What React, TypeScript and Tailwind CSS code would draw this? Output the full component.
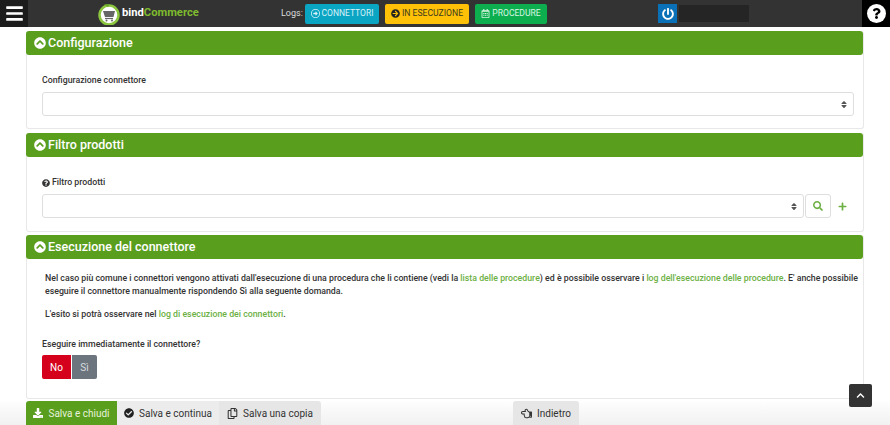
import React from "react";
import { FaChevronCircleUp, FaCheckCircle, FaQuestionCircle, FaRegCalendarAlt, FaArrowCircleRight, FaSearch, FaPlus, FaDownload, FaRegCopy, FaRegHandPointLeft, FaChevronUp, FaBars, FaPowerOff, FaQuestion, FaSort } from "react-icons/fa";
import { FaRegCircleRight } from "react-icons/fa6";

const Logo = () => (
  <svg width="22" height="22" viewBox="0 0 22 22">
    <circle cx="11" cy="12" r="9.5" fill="#fff" stroke="#8cc63f" strokeWidth="2.5" />
    <path d="M6 1.5 L12 1 L10 4 Z" fill="#6aa82c" />
    <path d="M5 8 H17 L15.5 14 H7 Z" fill="#666" />
    <path d="M7 15.5 H15" stroke="#666" strokeWidth="1.2" />
    <circle cx="8.5" cy="17.5" r="1" fill="#666" />
    <circle cx="14" cy="17.5" r="1" fill="#666" />
  </svg>
);

const PanelHead = ({ title }: { title: string }) => (
  <div className="h-6 bg-[#5a9e1e] rounded-[3px] flex items-center pl-2 text-white text-[12.5px] font-medium gap-[2px]">
    <FaChevronCircleUp className="w-[12px] h-[12px]" />
    <span>{title}</span>
  </div>
);

const SelectBox = ({ className }: { className: string }) => (
  <div className={"h-6 border border-[#dedede] rounded-[3px] bg-white flex items-center justify-end pr-[6px] " + className}>
    <FaSort className="w-[6px] h-[9px] text-[#555]" />
  </div>
);

const A = ({ children }: { children: React.ReactNode }) => (
  <a className="text-[#6cb044]">{children}</a>
);

export default function App() {
  return (
    <div className="relative h-[425px] w-[890px] overflow-hidden bg-white flex flex-col font-['Roboto',sans-serif] text-[#333]">
      <header className="h-[27px] shrink-0 bg-[#333333] flex items-center text-white">
        <div className="w-[28px] h-full bg-[#1c1c1c] flex items-center justify-center">
          <FaBars className="w-[19px] h-[19px]" />
        </div>
        <div className="ml-[70px] flex items-center w-[183px]">
          <Logo />
          <span className="ml-[2px] text-[11.2px] font-bold">
            bind<span className="text-[#7fbb2e]">Commerce</span>
          </span>
        </div>
        <span className="w-[24px] text-[9px] text-[#ddd]">Logs:</span>
        <div className="flex items-center gap-[6px]">
          <div className="h-[20px] w-[74px] rounded-[2px] bg-[#0ba5c4] flex items-center justify-center gap-[2px] text-[8.5px] text-[#d8f2f7]">
            <FaRegCircleRight className="w-[9px] h-[9px]" />CONNETTORI
          </div>
          <div className="h-[20px] w-[84px] rounded-[2px] bg-[#ffc107] flex items-center justify-center gap-[2px] text-[8.6px] text-[#3a3a20]">
            <FaArrowCircleRight className="w-[9px] h-[9px] text-[#222]" />IN ESECUZIONE
          </div>
          <div className="h-[20px] w-[72px] rounded-[2px] bg-[#0cae4e] flex items-center justify-center gap-[2px] text-[8.6px] text-[#d8f5e2]">
            <FaRegCalendarAlt className="w-[9px] h-[9px]" />PROCEDURE
          </div>
        </div>
        <div className="ml-[111px] w-[19px] h-[19px] bg-[#0a70b8] flex items-center justify-center">
          <FaPowerOff className="w-[12px] h-[12px]" />
        </div>
        <div className="ml-[2px] w-[70px] h-[17px] bg-[#252525] rounded-[1px]" />
        <div className="ml-auto w-[28px] h-full bg-black flex items-center justify-center">
          <div className="w-[19px] h-[19px] rounded-full bg-white flex items-center justify-center">
            <FaQuestion className="w-[11px] h-[11px] text-black" />
          </div>
        </div>
      </header>

      <main className="flex-1 pl-[26px] pr-[26px] pt-[4px] text-[8.78px]">
        <section className="border-r border-l border-b border-[#e8e8e8] rounded-[3px] h-[98px]">
          <div className="ml-[-1px]"><PanelHead title="Configurazione" /></div>
          <div className="pl-[15px] pr-[9px] pt-[19px]">
            <label className="block font-medium text-[#333] h-[18px]">Configurazione connettore</label>
            <SelectBox className="w-full" />
          </div>
        </section>

        <section className="mt-[4px] border-r border-l border-b border-[#e8e8e8] rounded-[3px] h-[99px]">
          <div className="ml-[-1px]"><PanelHead title="Filtro prodotti" /></div>
          <div className="pl-[15px] pr-[9px] pt-[17px]">
            <label className="flex items-center gap-[2px] font-medium h-[17px] mb-[3px]">
              <FaQuestionCircle className="w-[8px] h-[8px]" />Filtro prodotti
            </label>
            <div className="flex items-center">
              <SelectBox className="w-[762px]" />
              <div className="ml-[1px] w-[26px] h-6 border border-[#dedede] rounded-[3px] flex items-center justify-center">
                <FaSearch className="w-[10px] h-[10px] text-[#6cb044]" />
              </div>
              <FaPlus className="ml-[7px] w-[9px] h-[9px] text-[#6cb044]" />
            </div>
          </div>
        </section>

        <section className="mt-[3px] border-r border-l border-b border-[#e8e8e8] rounded-[3px] h-[164px]">
          <div className="ml-[-1px]"><PanelHead title="Esecuzione del connettore" /></div>
          <div className="pl-[18px] pr-[2px] pt-[13px] leading-[13px] font-medium">
            <p className="whitespace-nowrap">
              Nel caso più comune i connettori vengono attivati dall'esecuzione di una procedura che li contiene (vedi la <A>lista delle procedure</A>) ed è possibile osservare i <A>log dell'esecuzione delle procedure</A>. E' anche possibile
            </p>
            <p>eseguire il connettore manualmente rispondendo Sì alla seguente domanda.</p>
            <p className="mt-[10px]">L'esito si potrà osservare nel <A>log di esecuzione dei connettori</A>.</p>
          </div>
          <div className="pl-[15px] pt-[16px]">
            <div className="font-medium h-[14px] leading-[14px]">Eseguire immediatamente il connettore?</div>
            <div className="flex mt-[4px]">
              <div className="w-[29px] h-6 bg-[#d5001c] rounded-l-[2px] flex items-center justify-center text-white text-[10px]">No</div>
              <div className="w-[25px] h-6 ml-[1px] bg-[#6c757d] rounded-r-[2px] flex items-center justify-center text-[#d8dcdf] text-[10px]">Sì</div>
            </div>
          </div>
        </section>
      </main>

      <footer className="h-[26px] shrink-0 bg-gradient-to-b from-white to-[#f1f1f1] flex items-end pl-[26px] text-[10px]">
        <div className="h-[24px] flex rounded-t-[3px] overflow-hidden">
          <div className="w-[91px] bg-[#5a9e1e] text-[#e6f2da] flex items-center justify-center gap-[5px]">
            <FaDownload className="w-[10px] h-[10px] text-white" />Salva e chiudi
          </div>
          <div className="w-[102px] bg-[#ececec] flex items-center justify-center gap-[5px]">
            <FaCheckCircle className="w-[10px] h-[10px] text-[#222]" />Salva e continua
          </div>
          <div className="w-[102px] bg-[#e6e6e6] flex items-center justify-center gap-[5px]">
            <FaRegCopy className="w-[11px] h-[11px]" />Salva una copia
          </div>
        </div>
        <div className="ml-[192px] w-[66px] h-[24px] bg-[#e6e6e6] rounded-t-[3px] flex items-center justify-center gap-[5px]">
          <FaRegHandPointLeft className="w-[11px] h-[11px]" />Indietro
        </div>
      </footer>

      <div className="absolute left-[849px] top-[384px] w-[23px] h-[23px] bg-[#333] rounded-[2px] flex items-center justify-center">
        <FaChevronUp className="w-[9px] h-[9px] text-white" />
      </div>
    </div>
  );
}
